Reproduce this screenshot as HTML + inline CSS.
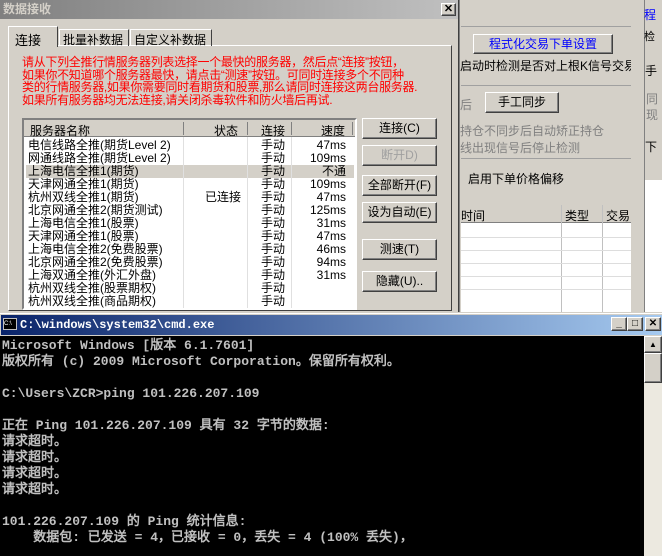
<!DOCTYPE html>
<html><head><meta charset="utf-8"><style>
*{margin:0;padding:0;box-sizing:border-box}
body{width:662px;height:556px;overflow:hidden;background:#d4d0c8;font-family:"Liberation Sans","WenQuanYi Zen Hei","Noto Sans CJK SC",sans-serif;font-size:12px;position:relative}
.a{position:absolute}
.btn{position:absolute;background:#d4d0c8;border:1px solid;border-color:#fff #404040 #404040 #fff;box-shadow:inset -1px -1px 0 #808080;text-align:center;font-size:12px;line-height:18px;color:#000}
.row{position:absolute;left:0;height:13px;line-height:13px;font-size:12px;width:330px;white-space:nowrap}
.row span{position:absolute}
.row span.s{right:8px;text-align:right}
.cmd{font-family:"Liberation Mono","WenQuanYi Zen Hei",monospace;font-size:13px;color:#c0c0c0;font-weight:bold;white-space:pre;line-height:16px}
</style></head><body>
<div class="a" style="left:459px;top:0;width:4px;height:312px;background:#d4d0c8;border-left:1px solid #808080"></div>
<div class="a" style="left:461px;top:26px;width:186px;height:1px;background:#a0a0a0"></div>
<div class="btn" style="left:473px;top:34px;width:140px;height:20px;color:#0000ff">程式化交易下单设置</div>
<div class="a" style="left:460px;top:57px;font-size:12px">启动时检测是否对上根K信号交易</div>
<div class="a" style="left:461px;top:85px;width:186px;height:1px;background:#a0a0a0"></div>
<div class="a" style="left:460px;top:96px;color:#808080">后</div>
<div class="btn" style="left:485px;top:92px;width:74px;height:21px">手工同步</div>
<div class="a" style="left:460px;top:122px;color:#808080">持仓不同步后自动矫正持仓</div>
<div class="a" style="left:460px;top:139px;color:#808080">线出现信号后停止检测</div>
<div class="a" style="left:461px;top:158px;width:186px;height:1px;background:#a0a0a0"></div>
<div class="a" style="left:468px;top:170px">启用下单价格偏移</div>
<div class="a" style="left:461px;top:205px;width:170px;height:107px;background:#fff"></div>
<div class="a" style="left:461px;top:205px;width:170px;height:18px;background:#d4d0c8;border-bottom:1px solid #808080"></div>
<div class="a" style="left:461px;top:207px">时间</div>
<div class="a" style="left:565px;top:207px">类型</div>
<div class="a" style="left:606px;top:207px">交易</div>
<div class="a" style="left:561px;top:205px;width:1px;height:107px;background:#c0c0c0"></div>
<div class="a" style="left:602px;top:205px;width:1px;height:107px;background:#c0c0c0"></div>
<div class="a" style="left:461px;top:237px;width:170px;height:1px;background:#ddd"></div>
<div class="a" style="left:461px;top:250px;width:170px;height:1px;background:#ddd"></div>
<div class="a" style="left:461px;top:263px;width:170px;height:1px;background:#ddd"></div>
<div class="a" style="left:461px;top:276px;width:170px;height:1px;background:#ddd"></div>
<div class="a" style="left:461px;top:289px;width:170px;height:1px;background:#ddd"></div>
<div class="a" style="left:631px;top:0;width:13px;height:312px;background:#d4d0c8"></div>
<div class="a" style="left:644px;top:0;width:18px;height:312px;background:#d4d0c8;border-left:1px solid #808080"></div>
<div class="a" style="left:644px;top:6px;color:#00f;font-size:12px">程</div>
<div class="a" style="left:644px;top:28px;font-size:11px">检</div>
<div class="a" style="left:645px;top:62px">手</div>
<div class="a" style="left:646px;top:90px;color:#808080">同</div>
<div class="a" style="left:646px;top:106px;color:#808080">现</div>
<div class="a" style="left:645px;top:138px">下</div>
<div class="a" style="left:645px;top:180px;width:17px;height:132px;background:#fff"></div>
<div class="a" style="left:0;top:0;width:459px;height:312px;background:#d4d0c8;border-right:1px solid #404040"></div>
<div class="a" style="left:0;top:0;width:458px;height:19px;background:linear-gradient(90deg,#808080,#c0c0c0);color:#d4d0c8;font-weight:bold;font-size:12px;line-height:19px;padding-left:3px">数据接收</div>
<div class="btn" style="left:441px;top:3px;width:15px;height:13px;line-height:11px;font-weight:bold;font-size:11px">✕</div>
<div class="a" style="left:8px;top:45px;width:444px;height:266px;border:1px solid;border-color:#fff #404040 #404040 #fff"></div>
<div class="a" style="left:8px;top:26px;width:50px;height:21px;background:#d4d0c8;border:1px solid;border-color:#fff #404040 transparent #fff;border-bottom:none;padding:3px 0 0 6px;font-size:13px">连接</div>
<div class="a" style="left:59px;top:29px;width:70px;height:17px;border:1px solid;border-color:#fff #404040 transparent #fff;border-bottom:none;padding:1px 0 0 3px;font-size:12px">批量补数据</div>
<div class="a" style="left:130px;top:29px;width:82px;height:17px;border:1px solid;border-color:#fff #404040 transparent #fff;border-bottom:none;padding:1px 0 0 3px;font-size:12px">自定义补数据</div>
<div class="a" style="left:22px;top:56px;color:#f00;font-size:12px;line-height:12.5px;width:420px;letter-spacing:-0.3px">请从下列全推行情服务器列表选择一个最快的服务器，然后点“连接”按钮，<br>如果你不知道哪个服务器最快，请点击“测速”按钮。可同时连接多个不同种<br>类的行情服务器,如果你需要同时看期货和股票,那么请同时连接这两台服务器.<br>如果所有服务器均无法连接,请关闭杀毒软件和防火墙后再试.</div>
<div class="a" style="left:22px;top:118px;width:335px;height:192px;background:#fff;border:2px solid;border-color:#808080 #fff #fff #808080;overflow:hidden">
<div class="a" style="left:0;top:0;width:335px;height:17px;background:#d4d0c8;border-bottom:1px solid #808080"></div>
<div class="a" style="left:6px;top:2px">服务器名称</div>
<div class="a" style="left:190px;top:2px">状态</div>
<div class="a" style="left:237px;top:2px">连接</div>
<div class="a" style="left:297px;top:2px">速度</div>
<div class="a" style="left:159px;top:2px;width:1px;height:13px;background:#808080"></div>
<div class="a" style="left:223px;top:2px;width:1px;height:13px;background:#808080"></div>
<div class="a" style="left:267px;top:2px;width:1px;height:13px;background:#808080"></div>
<div class="a" style="left:328px;top:2px;width:1px;height:13px;background:#808080"></div>
<div class="a" style="left:2px;top:45px;width:328px;height:13px;background:#d4d0c8"></div>
<div style="position:absolute;left:0;top:19px">
<div class="row" style="top:0"><span style="left:4px">电信线路全推(期货Level 2)</span><span style="left:237px">手动</span><span class="s">47ms</span></div>
<div class="row" style="top:13px"><span style="left:4px">网通线路全推(期货Level 2)</span><span style="left:237px">手动</span><span class="s">109ms</span></div>
<div class="row" style="top:26px"><span style="left:4px">上海电信全推1(期货)</span><span style="left:237px">手动</span><span class="s">不通</span></div>
<div class="row" style="top:39px"><span style="left:4px">天津网通全推1(期货)</span><span style="left:237px">手动</span><span class="s">109ms</span></div>
<div class="row" style="top:52px"><span style="left:4px">杭州双线全推1(期货)</span><span style="left:181px">已连接</span><span style="left:237px">手动</span><span class="s">47ms</span></div>
<div class="row" style="top:65px"><span style="left:4px">北京网通全推2(期货测试)</span><span style="left:237px">手动</span><span class="s">125ms</span></div>
<div class="row" style="top:78px"><span style="left:4px">上海电信全推1(股票)</span><span style="left:237px">手动</span><span class="s">31ms</span></div>
<div class="row" style="top:91px"><span style="left:4px">天津网通全推1(股票)</span><span style="left:237px">手动</span><span class="s">47ms</span></div>
<div class="row" style="top:104px"><span style="left:4px">上海电信全推2(免费股票)</span><span style="left:237px">手动</span><span class="s">46ms</span></div>
<div class="row" style="top:117px"><span style="left:4px">北京网通全推2(免费股票)</span><span style="left:237px">手动</span><span class="s">94ms</span></div>
<div class="row" style="top:130px"><span style="left:4px">上海双通全推(外汇外盘)</span><span style="left:237px">手动</span><span class="s">31ms</span></div>
<div class="row" style="top:143px"><span style="left:4px">杭州双线全推(股票期权)</span><span style="left:237px">手动</span></div>
<div class="row" style="top:156px"><span style="left:4px">杭州双线全推(商品期权)</span><span style="left:237px">手动</span></div>
</div>
<div class="a" style="left:159px;top:17px;width:1px;height:175px;background:#e0e0e0"></div>
<div class="a" style="left:223px;top:17px;width:1px;height:175px;background:#e0e0e0"></div>
<div class="a" style="left:267px;top:17px;width:1px;height:175px;background:#e0e0e0"></div>
</div>
<div class="btn" style="left:362px;top:118px;width:75px;height:21px">连接(C)</div>
<div class="btn" style="left:362px;top:145px;width:75px;height:21px;color:#a0a0a0">断开D)</div>
<div class="btn" style="left:362px;top:175px;width:75px;height:21px">全部断开(F)</div>
<div class="btn" style="left:362px;top:202px;width:75px;height:21px">设为自动(E)</div>
<div class="btn" style="left:362px;top:239px;width:75px;height:21px">测速(T)</div>
<div class="btn" style="left:362px;top:271px;width:75px;height:21px">隐藏(U)..</div>
<div class="a" style="left:0;top:313px;width:662px;height:243px;background:#d4d0c8;border-top:1px solid #fff"></div>
<div class="a" style="left:1px;top:315px;width:661px;height:20px;background:linear-gradient(90deg,#0a246a,#a6caf0);"></div>
<div class="a" style="left:3px;top:318px;width:14px;height:12px;background:#000;border:1px solid #c0c0c0;color:#fff;font-size:6px;line-height:10px">C:\</div>
<div class="a" style="left:20px;top:317px;color:#fff;font-family:'Liberation Mono',monospace;font-size:12px;font-weight:bold;line-height:16px">C:\windows\system32\cmd.exe</div>
<div class="btn" style="left:611px;top:317px;width:16px;height:14px;line-height:12px;font-size:10px;font-weight:bold">_</div>
<div class="btn" style="left:627px;top:317px;width:16px;height:14px;line-height:12px;font-size:10px">□</div>
<div class="btn" style="left:645px;top:317px;width:16px;height:14px;line-height:12px;font-size:10px;font-weight:bold">✕</div>
<div class="a" style="left:0;top:336px;width:644px;height:220px;background:#000"></div>
<div class="a" style="left:644px;top:336px;width:18px;height:220px;background:#ece9e0"></div>
<div class="btn" style="left:644px;top:336px;width:18px;height:17px;font-size:8px;line-height:15px">▲</div>
<div class="btn" style="left:644px;top:353px;width:18px;height:30px"></div>
<div class="a cmd" style="left:2px;top:338px">Microsoft Windows [版本 6.1.7601]
版权所有 (c) 2009 Microsoft Corporation。保留所有权利。

C:\Users\ZCR>ping 101.226.207.109

正在 Ping 101.226.207.109 具有 32 字节的数据:
请求超时。
请求超时。
请求超时。
请求超时。

101.226.207.109 的 Ping 统计信息:
    数据包: 已发送 = 4，已接收 = 0，丢失 = 4 (100% 丢失)，</div>
</body></html>
